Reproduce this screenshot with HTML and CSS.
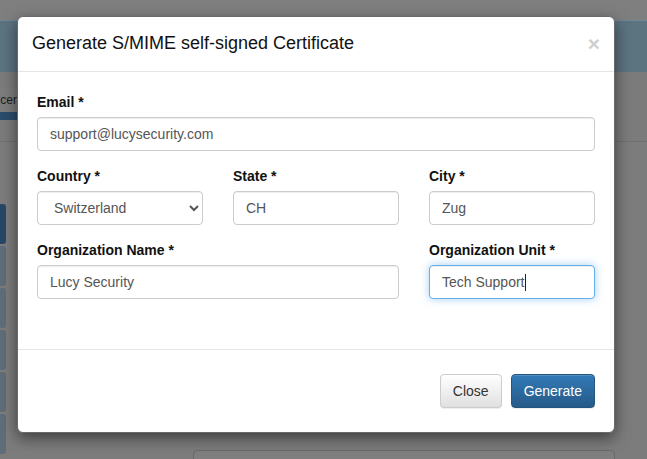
FILE: index.html
```html
<!DOCTYPE html>
<html lang="en">
<head>
<meta charset="utf-8">
<title>Generate S/MIME self-signed Certificate</title>
<link rel="stylesheet" href="styles.css">
</head>
<body>
<div class="page">
  <div class="page-top"></div>
  <div class="page-band"></div>
  <div class="page-tabs">
    <div class="page-tab"><span>cer</span></div>
  </div>
  <div class="page-rule"></div>
  <div class="page-main">
    <div class="page-side">
      <div class="side-btn active"></div>
      <div class="side-btn"></div>
      <div class="side-btn"></div>
      <div class="side-btn"></div>
      <div class="side-btn"></div>
      <div class="side-btn"></div>
    </div>
    <div class="page-content">
      <div class="page-box"></div>
    </div>
  </div>
</div>

<div class="modal">
  <div class="modal-header">
    <h4 class="modal-title">Generate S/MIME self-signed Certificate</h4>
    <span class="modal-close">&times;</span>
  </div>
  <div class="modal-body">
    <div class="form-group">
      <label class="label">Email *</label>
      <input class="form-control" type="text" value="support@lucysecurity.com">
    </div>
    <div class="form-row three">
      <div class="form-group">
        <label class="label">Country *</label>
        <select class="form-control select"><option>Switzerland</option></select>
      </div>
      <div class="form-group">
        <label class="label">State *</label>
        <input class="form-control" type="text" value="CH">
      </div>
      <div class="form-group">
        <label class="label">City *</label>
        <input class="form-control" type="text" value="Zug">
      </div>
    </div>
    <div class="form-row two">
      <div class="form-group">
        <label class="label">Organization Name *</label>
        <input class="form-control" type="text" value="Lucy Security">
      </div>
      <div class="form-group">
        <label class="label">Organization Unit *</label>
        <div class="form-control focused">Tech Support<span class="caret"></span></div>
      </div>
    </div>
  </div>
  <div class="modal-footer">
    <button class="btn btn-default" type="button">Close</button>
    <button class="btn btn-primary" type="button">Generate</button>
  </div>
</div>
</body>
</html>
```

FILE: styles.css
```css
* { box-sizing: border-box; }
html, body { margin: 0; padding: 0; }
html { background: #7f7f7f; }
body {
  width: 647px;
  height: 459px;
  overflow: hidden;
  background: #7f7f7f;
  font-family: "Liberation Sans", Arial, Helvetica, sans-serif;
  font-size: 14px;
  line-height: 20px;
  color: #333;
  position: relative;
}

/* dimmed background page */
.page { display: flex; flex-direction: column; height: 459px; overflow: hidden; }
.page > * { flex-shrink: 0; }
.page-top { height: 20px; background: #7f7f7f; }
.page-band {
  height: 52px;
  background: #5c7380;
  border-top: 1px solid #6d8797;
}
.page-tabs {
  height: 48px;
  background: #7b7b7b;
  display: flex;
  align-items: flex-end;
}
.page-tab {
  width: 17px;
  height: 32px;
  overflow: hidden;
  display: flex;
  justify-content: flex-end;
  background: #7d7d7d;
  border-bottom: 8px solid #2b4c6b;
  color: #1e1e1e;
  font-size: 12px;
  line-height: 22px;
}
.page-tab span { white-space: nowrap; padding-top: 1px; }
.page-rule { height: 22px; border-bottom: 1px solid #6f6f6f; background: #7b7b7b; }
.page-main { flex: 1 0 auto; display: flex; background: #7c7c7c; }
.page-side {
  width: 6px;
  padding-top: 62px;
  display: flex;
  flex-direction: column;
  gap: 2px;
}
.side-btn {
  height: 40px;
  flex-shrink: 0;
  background: #5e6d79;
  border-radius: 0 3px 3px 0;
}
.side-btn.active { background: #264766; }
.page-content { flex: 1; padding-left: 187px; padding-right: 32px; }
.page-box {
  margin-top: 308px;
  height: 30px;
  border: 1px solid #6a6a6a;
  border-radius: 4px;
  background: #7f7f7f;
}

/* modal */
.modal {
  position: absolute;
  left: 17px;
  top: 16px;
  width: 598px;
  background: #fff;
  border: 1px solid #6a6a6a;
  border-radius: 6px;
  box-shadow: 0 5px 15px rgba(0, 0, 0, 0.5);
}
.modal-header {
  display: flex;
  justify-content: space-between;
  align-items: flex-start;
  padding: 14px;
  border-bottom: 1px solid #e5e5e5;
}
.modal-title {
  margin: 0;
  font-size: 18px;
  font-weight: normal;
  line-height: 25.7px;
  color: #111;
}
.modal-close {
  font-size: 21px;
  font-weight: bold;
  line-height: 1;
  color: #cfcfcf;
  margin-top: 2px;
}
.modal-body { padding: 20px 19px 35px 19px; }
.form-group { margin-bottom: 15px; }
.form-row { display: grid; column-gap: 30px; margin-bottom: 15px; }
.form-row .form-group { margin-bottom: 0; }
.form-row.three { grid-template-columns: 166px 166px 166px; }
.form-row.two { grid-template-columns: 362px 166px; }
.label {
  display: block;
  margin-bottom: 5px;
  font-weight: bold;
  color: #111;
  font-size: 14px;
  line-height: 20px;
}
.form-control {
  display: block;
  width: 100%;
  height: 34px;
  padding: 6px 12px;
  font-family: inherit;
  font-size: 14px;
  line-height: 20px;
  color: #555;
  background: #fff;
  border: 1px solid #ccc;
  border-radius: 4px;
  box-shadow: inset 0 1px 1px rgba(0, 0, 0, 0.075);
  outline: none;
}
.select { padding: 6px 4px 6px 12px; }
.focused {
  border-color: #66afe9;
  box-shadow: inset 0 1px 1px rgba(0, 0, 0, 0.075), 0 0 8px rgba(102, 175, 233, 0.6);
}
.caret {
  display: inline-block;
  width: 1px;
  height: 17px;
  background: #222;
  vertical-align: -4px;
}
.modal-footer {
  display: flex;
  justify-content: flex-end;
  gap: 9px;
  padding: 24px 19px;
  border-top: 1px solid #e5e5e5;
}
.btn {
  height: 34px;
  padding: 6px 12px;
  font-family: inherit;
  font-size: 14px;
  line-height: 20px;
  border-radius: 4px;
  border: 1px solid transparent;
  box-shadow: inset 0 1px 0 rgba(255, 255, 255, 0.15), 0 1px 1px rgba(0, 0, 0, 0.075);
}
.btn-default {
  color: #333;
  background-image: linear-gradient(to bottom, #fff 0, #e0e0e0 100%);
  border-color: #ccc;
}
.btn-primary {
  color: #fff;
  background-image: linear-gradient(to bottom, #337ab7 0, #265a88 100%);
  border-color: #245580;
}
```
